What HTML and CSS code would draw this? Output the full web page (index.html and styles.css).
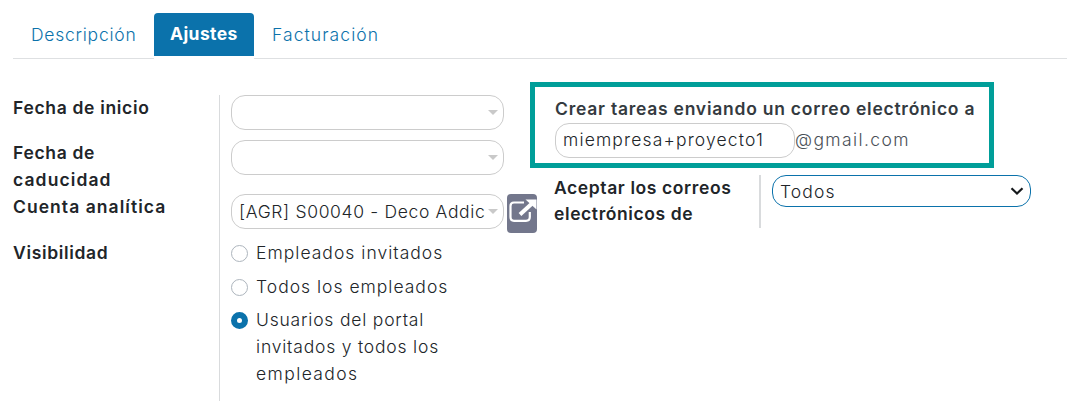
FILE: index.html
```html
<!DOCTYPE html>
<html lang="es">
<head>
<meta charset="utf-8">
<title>Ajustes del proyecto</title>
<link rel="stylesheet" href="styles.css">
</head>
<body>
<nav class="tabs">
  <a class="tab tab-description">Descripción</a>
  <a class="tab tab-active">Ajustes</a>
  <a class="tab tab-billing">Facturación</a>
</nav>
<main class="sheet">
  <section class="group">
    <div class="labels">
      <div class="label label-start">Fecha de inicio</div>
      <div class="label label-end">Fecha de<br><span class="t-expiry">caducidad</span></div>
      <div class="label label-account">Cuenta analítica</div>
      <div class="label">Visibilidad</div>
    </div>
    <div class="values">
      <div class="field"><i class="caret"></i></div>
      <div class="field field-end"><i class="caret"></i></div>
      <div class="account">
        <div class="field"><span class="field-text">[AGR] S00040 - Deco Addict</span><i class="caret"></i></div>
        <div class="external">
          <svg width="30" height="39" viewBox="0 0 30 39" fill="none" stroke="#fff">
            <path d="M17 8.500H7Q3.500 8.500 3.500 12V23Q3.500 26.800 7 26.800H19Q22.800 26.800 22.800 23V18" stroke-width="2.200"/>
            <path d="M13 20.500L25 9.500" stroke-width="4"/>
            <path d="M18.500 5.500H29.500V15.500Z" fill="#fff" stroke="none"/>
          </svg>
        </div>
      </div>
      <div class="radios">
        <div class="option"><i class="radio"></i><span class="t-guests">Empleados invitados</span></div>
        <div class="option option-all"><i class="radio"></i><span class="t-all">Todos los empleados</span></div>
        <div class="option option-portal"><i class="radio checked"></i><span class="t-portal">Usuarios del portal<br>invitados y todos los<br><span class="t-employees">empleados</span></span></div>
      </div>
    </div>
  </section>
  <section class="mail">
    <div class="highlight">
      <div class="mail-title">Crear tareas enviando un correo electrónico a</div>
      <div class="alias">
        <div class="field alias-field">miempresa+proyecto1</div>
        <span class="domain">@gmail.com</span>
      </div>
    </div>
    <div class="accept">
      <div class="accept-label">Aceptar los correos<br>electrónicos de</div>
      <div class="select">
        <span>Todos</span>
        <svg width="14" height="10" viewBox="0 0 14 10" fill="none" stroke="#16191c" stroke-width="2.200"><path d="M1.500 2.200L7 7.500L12.500 2.200"/></svg>
      </div>
    </div>
  </section>
</main>
</body>
</html>
```
FILE: styles.css
```css
* { box-sizing: border-box; }
body {
  margin: 0;
  width: 1067px;
  height: 419px;
  overflow: hidden;
  background: #fff;
  color: #212529;
  font: 300 17.5px/27px Inter, "Open Sans", sans-serif;
  white-space: nowrap;
}
.tabs {
  display: flex;
  height: 59px;
  margin-left: 13px;
  padding-top: 13px;
}
.tab {
  padding: 8px 18px 0;
  border-bottom: 1px solid #dee0e2;
  color: #0b72ab;
  height: 46px;
}
.tab-description { width: 141px; letter-spacing: .75px; }
.tab-active {
  width: 100px;
  height: 43px;
  padding: 7px 16px 0;
  border: 0;
  border-radius: 4px 4px 0 0;
  background: #0b72ab;
  color: #fff;
  font-weight: 700;
  letter-spacing: .4px;
}
.tab-billing { flex: 1; letter-spacing: 1.08px; }
.sheet { display: flex; }
.group {
  display: flex;
  flex: none;
  width: 530px;
  margin-top: 36px;
  padding-left: 13px;
}
.labels {
  flex: none;
  width: 207px;
  height: 306px;
  border-right: 1px solid #d9dbdd;
  font-weight: 600;
  letter-spacing: .67px;
}
.label { position: relative; top: -1px; }
.label-start { height: 45px; }
.label-end { height: 54px; }
.t-expiry { letter-spacing: 1.1px; }
.label-account { height: 46px; letter-spacing: 1.05px; }
.values { flex: none; padding-left: 11px; }
.field {
  display: flex;
  align-items: center;
  justify-content: flex-end;
  width: 273px;
  height: 35px;
  padding: 0 5px 0 7px;
  border: 1px solid #ccc;
  border-radius: 14px;
}
.field-end { margin: 10px 0 19px; }
.field-text { flex: 1; overflow: hidden; letter-spacing: .66px; }
.caret {
  border: 5px solid transparent;
  border-top-color: #c9c9c9;
  border-bottom: 0;
  margin-left: 3px;
}
.account { display: flex; gap: 3px; height: 39px; }
.external {
  width: 30px;
  height: 39px;
  border-radius: 4px;
  background: #73778c;
}
.external svg { display: block; }
.radios { padding-top: 6px; }
.option { display: flex; gap: 8px; }
.option-all { margin: 7px 0 6px; }
.t-guests { letter-spacing: 1.02px; }
.t-all { letter-spacing: 1px; }
.t-portal { letter-spacing: .8px; }
.t-employees { letter-spacing: 1.4px; }
.radio {
  width: 17px;
  height: 17px;
  margin-top: 6px;
  border: 1px solid #adb5bd;
  border-radius: 50%;
}
.checked { border: 6px solid #0b72ab; }
.mail { padding-top: 23px; }
.highlight {
  width: 464px;
  height: 86px;
  padding: 8px 0 0 20px;
  border: 5px solid #009e99;
}
.mail-title { height: 28px; color: #343a40; font-weight: 600; letter-spacing: .75px; }
.alias { display: flex; }
.alias-field {
  width: 240px;
  justify-content: flex-start;
  padding-bottom: 2px;
  letter-spacing: 1.15px;
}
.domain { padding-top: 3px; color: #495057; letter-spacing: 1.4px; }
.accept { display: flex; padding: 7px 0 0 24px; }
.accept-label {
  width: 207px;
  height: 53px;
  border-right: 2px solid #d9dbdd;
  line-height: 26px;
  font-weight: 600;
  letter-spacing: .6px;
}
.select {
  display: flex;
  align-items: center;
  justify-content: space-between;
  width: 259px;
  height: 32px;
  margin-left: 11px;
  padding: 0 6px 0 7px;
  border: 1px solid #0b72ab;
  border-radius: 14px;
  letter-spacing: 1.1px;
}
```
